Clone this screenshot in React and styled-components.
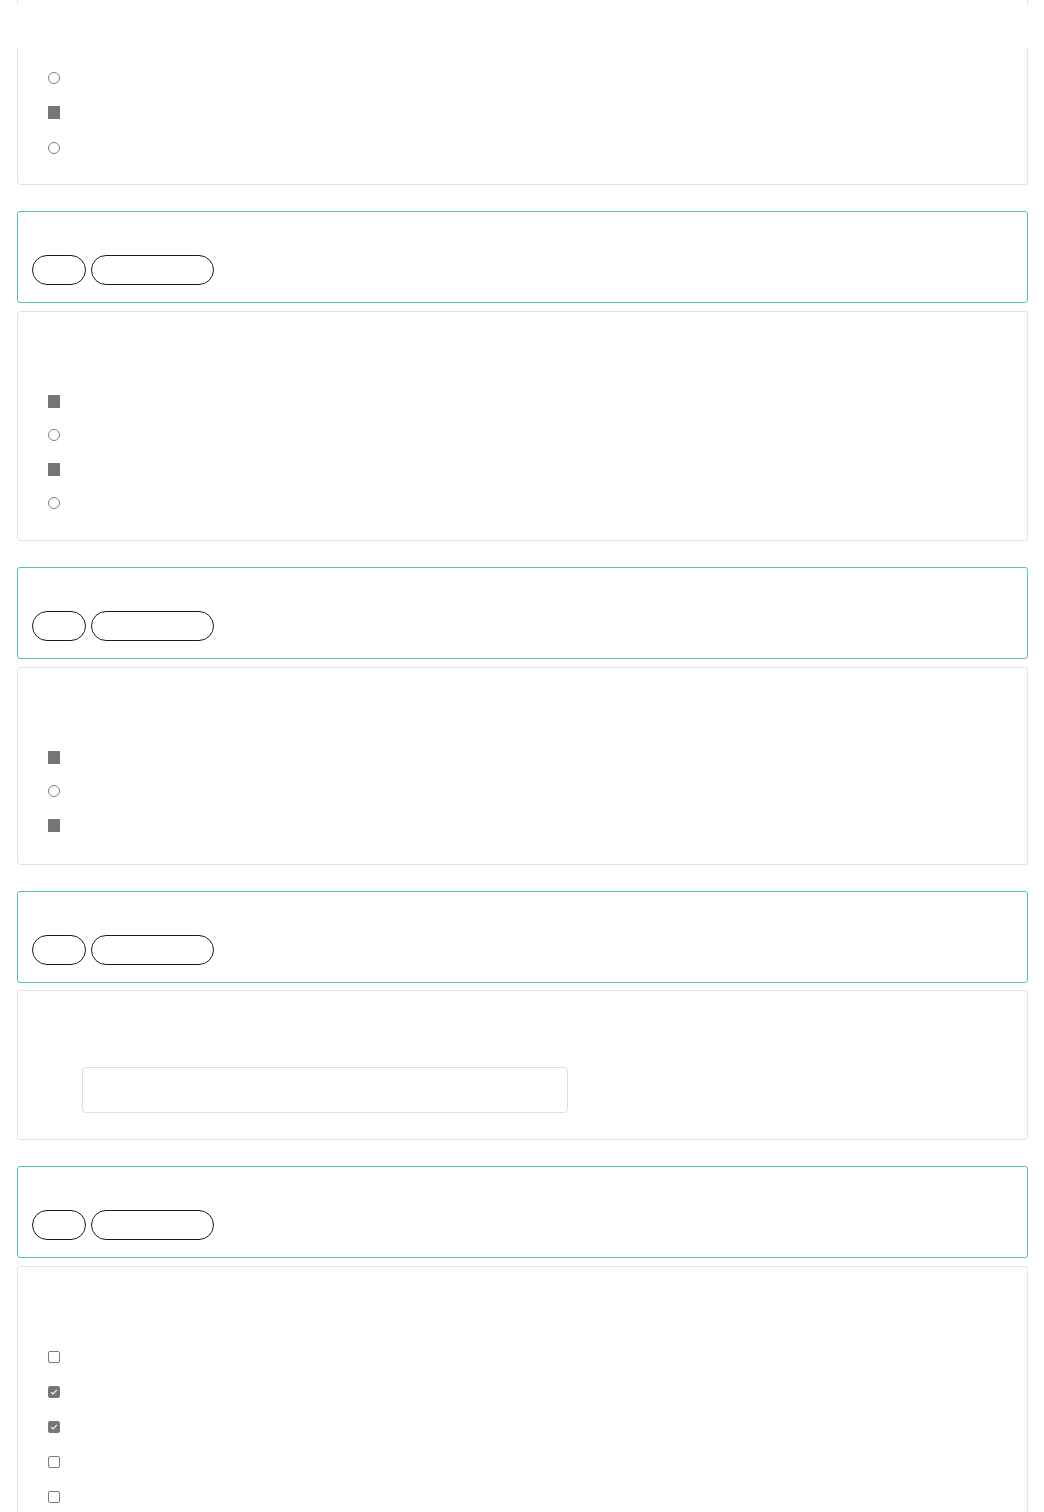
import React from "react";
import styled, { createGlobalStyle } from "styled-components";

const Global = createGlobalStyle`
  html, body { margin: 0; padding: 0; background: #fff; }
  body { font-family: "Liberation Sans", Arial, sans-serif; color: #333; overflow: hidden; }
`;

const Page = styled.div`
  display: flex;
  flex-direction: column;
  gap: 26px;
  padding: 0 16px 0 17px;
  margin-top: -13px;
`;

const Section = styled.section`
  display: flex;
  flex-direction: column;
  gap: ${(p) => (p.$gap ? p.$gap : 8)}px;
`;

const TopCover = styled.div`
  position: fixed;
  top: 5px;
  left: 0;
  right: 0;
  height: 43px;
  background: #fff;
  z-index: 5;
`;

const Card = styled.div`
  border: 1px solid #e4e4e4;
  border-radius: 3px;
  background: #fff;
  padding: 72px 30px ${(p) => (p.$pb ? p.$pb : 20)}px;
`;

const TagCard = styled.div`
  border: 1px solid #52c7a4;
  border-radius: 3px;
  background: #fff;
  padding: 43px 14px 17px;
  display: flex;
  gap: 5px;
`;

const Pill = styled.span`
  display: block;
  box-sizing: border-box;
  height: 30px;
  width: ${(p) => p.$w}px;
  border: 1px solid #1a1a1a;
  border-radius: 15px;
`;

const List = styled.div`
  display: flex;
  flex-direction: column;
`;

const Row = styled.div`
  display: flex;
  align-items: center;
  height: ${(p) => p.$h}px;
`;

const Circle = styled.span`
  display: block;
  box-sizing: border-box;
  width: 12px;
  height: 12px;
  border: 1px solid #808080;
  border-radius: 50%;
`;

const Square = styled.span`
  display: block;
  width: 12px;
  height: 13px;
  background: #767676;
`;

const Box = styled.span`
  display: flex;
  align-items: center;
  justify-content: center;
  box-sizing: border-box;
  width: 12px;
  height: 12px;
  border: 1px solid #7a7a7a;
  border-radius: 2px;
  background: ${(p) => (p.$on ? "#767676" : "#fff")};
`;

const InputArea = styled.div`
  margin-top: 4px;
`;

const Input = styled.div`
  box-sizing: border-box;
  margin-left: 34px;
  width: 486px;
  height: 46px;
  border: 1px solid #dedede;
  border-radius: 4px;
`;

const Check = () => (
  <svg width="8" height="8" viewBox="0 0 8 8">
    <path d="M1.2 4.2 L3.1 6 L6.8 1.8" fill="none" stroke="#fff" strokeWidth="1.1" />
  </svg>
);

const Choice = ({ kind }) => (kind === "sq" ? <Square /> : <Circle />);

const ChoiceList = ({ items, h = 34 }) => (
  <List>
    {items.map((k, i) => (
      <Row key={i} $h={h}>
        <Choice kind={k} />
      </Row>
    ))}
  </List>
);

const Tags = () => (
  <TagCard>
    <Pill $w={54} />
    <Pill $w={123} />
  </TagCard>
);

export default function App() {
  return (
    <>
      <Global />
      <TopCover />
      <Page>
        <Card $pb={19}>
          <ChoiceList items={["ci", "sq", "ci"]} h={35} />
        </Card>
        <Section>
          <Tags />
          <Card $pb={20}>
            <ChoiceList items={["sq", "ci", "sq", "ci"]} />
          </Card>
        </Section>
        <Section>
          <Tags />
          <Card $pb={22}>
            <ChoiceList items={["sq", "ci", "sq"]} />
          </Card>
        </Section>
        <Section $gap={7}>
          <Tags />
          <Card $pb={26}>
            <InputArea>
              <Input />
            </InputArea>
          </Card>
        </Section>
        <Section>
          <Tags />
          <Card>
            <List>
              {[false, true, true, false, false].map((on, i) => (
                <Row key={i} $h={35}>
                  <Box $on={on}>{on && <Check />}</Box>
                </Row>
              ))}
            </List>
          </Card>
        </Section>
      </Page>
    </>
  );
}
